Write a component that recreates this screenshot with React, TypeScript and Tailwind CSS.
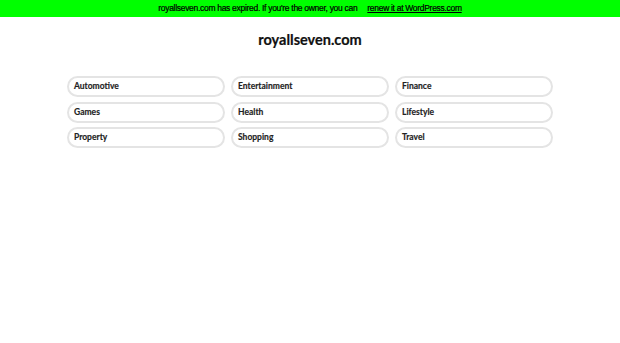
const CATEGORIES = [
  "Automotive",
  "Entertainment",
  "Finance",
  "Games",
  "Health",
  "Lifestyle",
  "Property",
  "Shopping",
  "Travel",
];

export default function App() {
  return (
    <div className="min-h-[343px] bg-white">
      {/* expired banner */}
      <div className="flex h-[17px] items-center justify-center bg-[#00ff00] font-['Liberation_Sans',Arial,sans-serif] text-[8.5px] tracking-[-0.3px] text-black [-webkit-text-stroke:0.2px_black]">
        <span>royallseven.com has expired. If you're the owner, you can</span>
        <a href="#" className="ml-[10px] underline">
          renew it at WordPress.com
        </a>
      </div>

      <h1 className="mt-[14px] text-center font-['Lato',sans-serif] text-[14.5px] font-bold leading-[18px] text-[#111] [-webkit-text-stroke:0.2px_#111]">
        royallseven.com
      </h1>

      <div className="mx-auto mt-[27px] grid w-[486px] grid-cols-3 gap-x-[6px] gap-y-[4.5px]">
        {CATEGORIES.map((c) => (
          <a
            key={c}
            href="#"
            className="flex h-[21px] items-center rounded-full border-2 border-[#e4e4e4] pl-[5px] font-['Lato',sans-serif] text-[8.5px] font-bold text-[#222] [-webkit-text-stroke:0.15px_#222]"
          >
            {c}
          </a>
        ))}
      </div>
    </div>
  );
}
